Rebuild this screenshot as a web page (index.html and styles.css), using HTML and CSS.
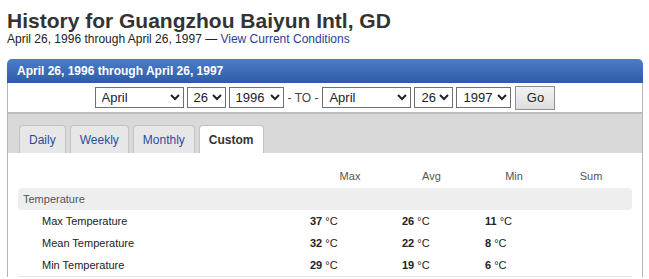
FILE: index.html
```html
<!DOCTYPE html>
<html lang="en">
<head>
    <meta charset="UTF-8">
    <title>History for Guangzhou Baiyun Intl, GD</title>
    <link rel="stylesheet" href="styles.css">
</head>
<body>
    <div class="page">
        <h1>History for Guangzhou Baiyun Intl, GD</h1>
        <p class="subtitle">April 26, 1996 through April 26, 1997 &mdash; <a href="#">View Current Conditions</a></p>

        <div class="history-box">
            <div class="box-title">April 26, 1996 through April 26, 1997</div>

            <form class="date-picker">
                <select class="sel-month">
                    <option>April</option>
                </select>
                <select class="sel-day">
                    <option>26</option>
                </select>
                <select class="sel-year">
                    <option>1996</option>
                </select>
                <span class="to">- TO -</span>
                <select class="sel-month">
                    <option>April</option>
                </select>
                <select class="sel-day">
                    <option>26</option>
                </select>
                <select class="sel-year">
                    <option>1997</option>
                </select>
                <button type="button" class="btn-go">Go</button>
            </form>

            <div class="tabs">
                <a href="#" class="tab">Daily</a>
                <a href="#" class="tab">Weekly</a>
                <a href="#" class="tab">Monthly</a>
                <a href="#" class="tab active">Custom</a>
            </div>

            <div class="summary">
                <div class="row head">
                    <span></span>
                    <span class="c-max">Max</span>
                    <span class="c-avg">Avg</span>
                    <span class="c-min">Min</span>
                    <span class="c-sum">Sum</span>
                </div>
                <div class="group">Temperature</div>
                <div class="row">
                    <span class="label">Max Temperature</span>
                    <span class="c-max"><b>37</b> &deg;C</span>
                    <span class="c-avg"><b>26</b> &deg;C</span>
                    <span class="c-min"><b>11</b> &deg;C</span>
                    <span class="c-sum"></span>
                </div>
                <div class="row">
                    <span class="label">Mean Temperature</span>
                    <span class="c-max"><b>32</b> &deg;C</span>
                    <span class="c-avg"><b>22</b> &deg;C</span>
                    <span class="c-min"><b>8</b> &deg;C</span>
                    <span class="c-sum"></span>
                </div>
                <div class="row last">
                    <span class="label">Min Temperature</span>
                    <span class="c-max"><b>29</b> &deg;C</span>
                    <span class="c-avg"><b>19</b> &deg;C</span>
                    <span class="c-min"><b>6</b> &deg;C</span>
                    <span class="c-sum"></span>
                </div>
            </div>
        </div>
    </div>
</body>
</html>
```

FILE: styles.css
```css
body {
    margin: 0;
    font-family: 'Liberation Sans', Arial, sans-serif;
    color: #333;
    background: white;
}

.page {
    padding: 0 6px 0 7px;
}

h1 {
    margin: 10px 0 0 0;
    font-size: 21px;
    line-height: 22px;
    font-weight: bold;
    color: #333;
}

.subtitle {
    margin: 0;
    font-size: 12px;
    line-height: 15px;
    color: #222;
}

.subtitle a {
    color: #1f3f9c;
    text-decoration: none;
}

.history-box {
    margin-top: 12px;
}

.box-title {
    height: 24px;
    line-height: 24px;
    padding-left: 10px;
    color: white;
    font-size: 12px;
    font-weight: bold;
    background: linear-gradient(#4b7dc8, #2f5ba7);
    border-radius: 5px 5px 0 0;
}

.date-picker {
    display: flex;
    align-items: center;
    justify-content: center;
    gap: 3px;
    height: 29px;
    background: white;
    border-left: 1px solid #b5b5b5;
    border-right: 1px solid #b5b5b5;
    box-shadow: 0 2px 0 #bdbdbd;
    position: relative;
    margin: 0;
}

.date-picker select {
    height: 21px;
    font-family: 'Liberation Sans', Arial, sans-serif;
    font-size: 13px;
    color: #222;
    background: white;
    border: 1px solid #707070;
    border-radius: 0;
    padding: 0 0 0 2px;
}

.sel-month {
    width: 89px;
}

.sel-day {
    width: 39px;
}

.sel-year {
    width: 55px;
}

.to {
    font-size: 12px;
    color: #444;
    margin: 0 1px;
}

.btn-go {
    width: 40px;
    height: 24px;
    margin-left: 1px;
    font-family: 'Liberation Sans', Arial, sans-serif;
    font-size: 13px;
    color: #222;
    background: linear-gradient(#f3f3f3, #dedede);
    border: 1px solid #8f8f8f;
    border-radius: 0;
}

.tabs {
    display: flex;
    gap: 4px;
    padding: 11px 0 0 11px;
    height: 28px;
    background: #d9d9d9;
    border-left: 1px solid #b5b5b5;
    border-right: 1px solid #b5b5b5;
    margin-top: 2px;
}

.tab {
    display: block;
    padding: 0 9px;
    line-height: 28px;
    height: 28px;
    font-size: 12px;
    color: #2a4c9f;
    text-decoration: none;
    background: #e7e7e7;
    border: 1px solid #c2c2c2;
    border-bottom: none;
    border-radius: 4px 4px 0 0;
    box-sizing: border-box;
}

.tab.active {
    background: white;
    color: #333;
    font-weight: bold;
}

.summary {
    background: white;
    padding: 12px 10px 0 10px;
    border-left: 1px solid #b5b5b5;
    border-right: 1px solid #b5b5b5;
    font-size: 11px;
}

.row {
    display: grid;
    grid-template-columns: 286px 92px 71px 94px 60px 1fr;
    height: 22px;
    line-height: 22px;
    color: #222;
}

.row.head {
    height: 23px;
    color: #555;
}

.row.head span {
    text-align: center;
}

.row.last {
    border-bottom: 1px solid #e4e4e4;
}

.row .label {
    padding-left: 24px;
}

.row .c-max,
.row .c-avg {
    padding-left: 6px;
}

.row .c-min {
    padding-left: 18px;
}

.row.head .c-max,
.row.head .c-avg,
.row.head .c-min {
    padding-left: 0;
}

.group {
    height: 22px;
    line-height: 22px;
    padding-left: 5px;
    background: #eeeeee;
    border-radius: 4px;
    color: #555;
}
```
